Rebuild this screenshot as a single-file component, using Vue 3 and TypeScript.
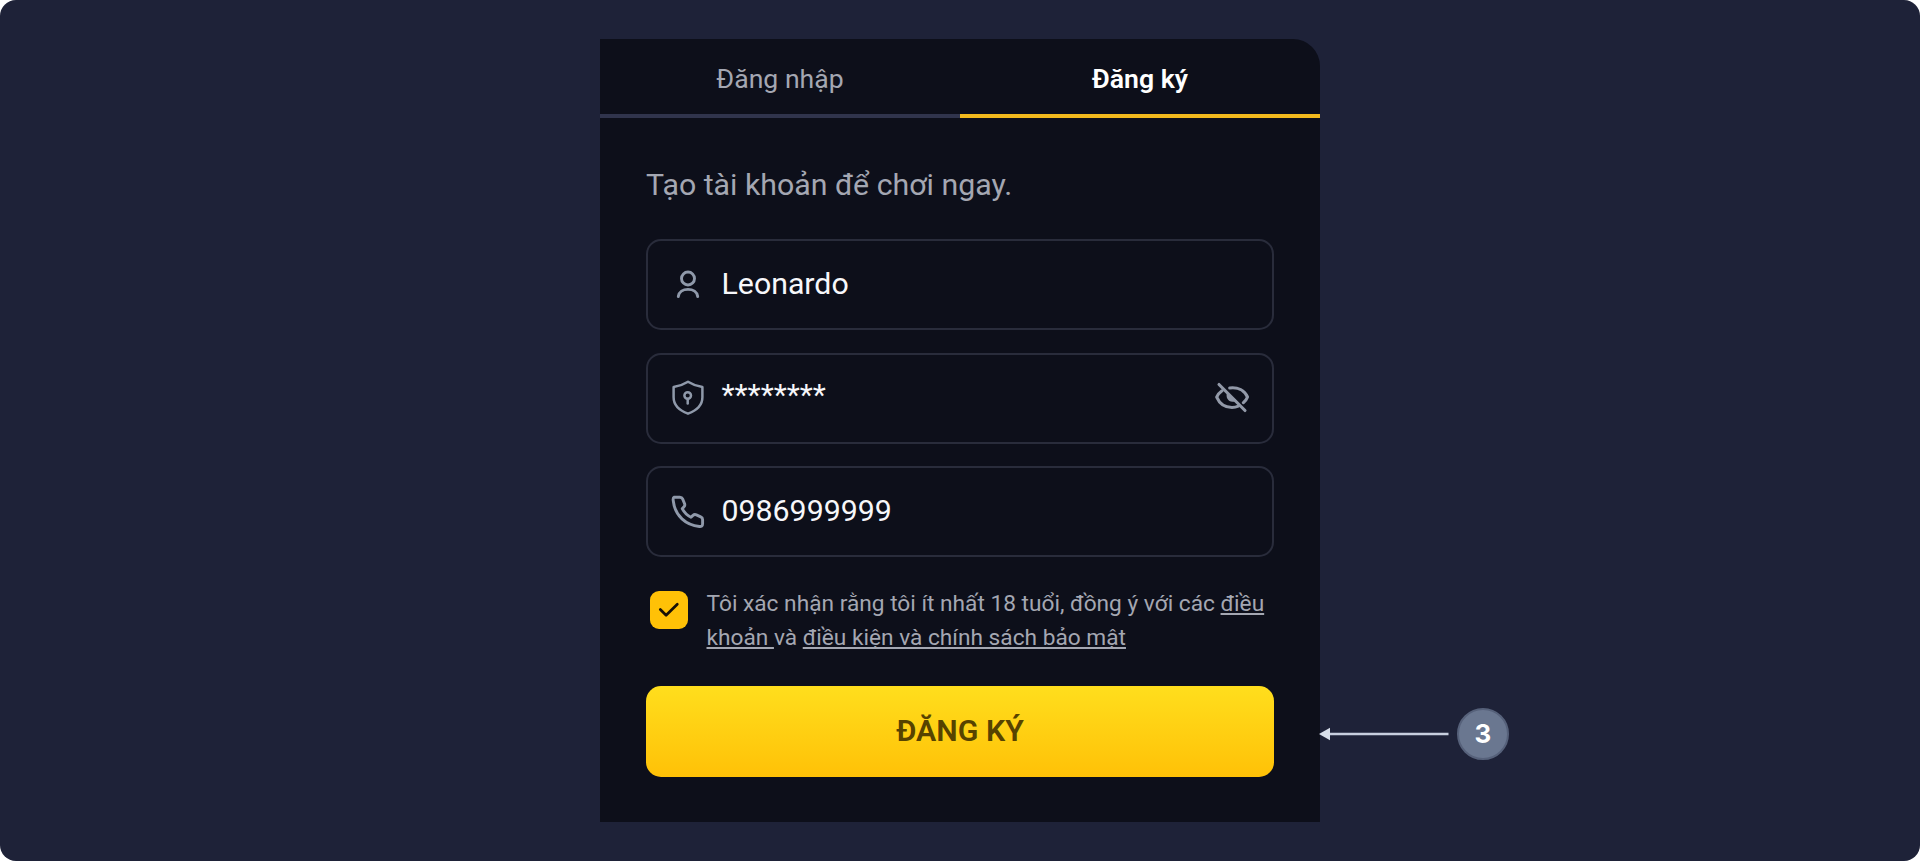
<script setup lang="ts">
import { ref } from 'vue'

type Tab = 'login' | 'register'

const activeTab = ref<Tab>('register')
const tabs: { id: Tab; label: string }[] = [
  { id: 'login', label: 'Đăng nhập' },
  { id: 'register', label: 'Đăng ký' },
]
const account = { name: 'Leonardo', password: '********', phone: '0986999999' }
const accepted = ref(true)
</script>

<template>
  <main class="stage">
    <section class="card">
      <nav class="tabs">
        <div
          v-for="tab in tabs"
          :key="tab.id"
          class="tab"
          :class="{ active: tab.id === activeTab }"
          @click="activeTab = tab.id"
        >
          <span>{{ tab.label }}</span>
        </div>
      </nav>

      <div class="body">
        <p class="intro"><span>Tạo tài khoản để chơi ngay.</span></p>

        <div class="fields">
          <div class="field">
            <svg class="icon" viewBox="0 0 36 36">
              <g fill="none" stroke="currentColor" stroke-width="2.9" stroke-linecap="round">
                <circle cx="18" cy="11.500" r="6.500" />
                <path d="M8.300 29.500c.6-4.500 4.700-7.100 9.700-7.100s9.100 2.600 9.700 7.100" />
              </g>
            </svg>
            <span class="value name">{{ account.name }}</span>
          </div>

          <div class="field">
            <svg class="icon" viewBox="0 0 36 36">
              <g fill="none" stroke="currentColor" stroke-width="2.500" stroke-linecap="round" stroke-linejoin="round">
                <path d="M18 1.700C13.500 4.500 9 6.200 3.600 7V17.300C3.600 25 8.800 30.300 18 33.700 27.200 30.300 32.400 25 32.400 17.300V7C27 6.200 22.500 4.500 18 1.700Z" />
                <circle cx="17.700" cy="15.500" r="3.300" />
                <path d="M17.700 19V23.500" />
              </g>
            </svg>
            <span class="value password">{{ account.password }}</span>
            <svg class="icon eye" viewBox="0 0 36 36">
              <g fill="none" stroke="currentColor" stroke-width="3.100" stroke-linecap="round" stroke-linejoin="round">
                <path d="M15.700 8C24 6.900 30.500 10.700 33.500 17 32.700 19.200 31.200 21.300 29.300 22.700" />
                <path d="M8 10.800C5.600 12.500 3.900 14.500 2.700 17.200 5.600 24 11.300 27.500 18 27.500 20.500 27.500 22.500 27 24.300 26.200" />
                <path d="M5 4.500 31 30.500" />
              </g>
              <path d="M13.200 12.500C11.300 17 14 21.800 18.500 21.800 20.300 21.800 21.700 21.300 22.700 20.500Z" fill="currentColor" />
            </svg>
          </div>

          <div class="field">
            <svg class="icon" viewBox="0 0 36 36">
              <path
                d="M4.200 3.200H9.900C11.300 3.200 12.100 3.700 12.600 4.900L14.600 9.700C15 10.900 14.900 11.800 14 12.700L12.200 14.700C13.900 18 17.400 21.500 21 23.300L23 21.400C24 20.500 25.200 20.400 26.400 20.900L30.700 22.800C32.100 23.400 32.600 24.200 32.600 25.600V29.800C32.600 32 31.300 32.700 29.400 32.500 16 31.300 5 22 3.300 7 3 4.800 2.700 3.700 4.200 3.200Z"
                fill="none"
                stroke="currentColor"
                stroke-width="2.900"
                stroke-linejoin="round"
              />
            </svg>
            <span class="value phone">{{ account.phone }}</span>
          </div>
        </div>

        <div class="consent">
          <div class="checkbox" @click="accepted = !accepted">
            <svg v-if="accepted" viewBox="0 0 38 38">
              <path d="M10.300 18.500 16.100 24.200 27.300 13.200" fill="none" stroke="#171006" stroke-width="2.700" stroke-linecap="round" stroke-linejoin="round" />
            </svg>
          </div>
          <p class="terms">
            <span class="line">Tôi xác nhận rằng tôi ít nhất 18 tuổi, đồng ý với các <u>điều</u></span>
            <span class="line second"><u>khoản </u>và <u>điều kiện và chính sách bảo mật</u></span>
          </p>
        </div>

        <div class="submit"><span>ĐĂNG KÝ</span></div>
      </div>

      <div class="callout">
        <svg class="arrow" viewBox="0 0 130 14">
          <path d="M9 7H129.500" stroke="#c8cfdf" stroke-width="2.300" />
          <path d="M0 7 11 .7V13.300Z" fill="#d9dfeb" />
        </svg>
        <span class="step">3</span>
      </div>
    </section>
  </main>
</template>

<style>
body {
  background: #fff;
}
</style>

<style scoped>
.stage {
  box-sizing: border-box;
  height: 861px;
  padding-top: 39px;
  border-radius: 16px;
  background: #1e2238;
  font-family: Roboto, "Noto Sans", sans-serif;
}
.card {
  position: relative;
  box-sizing: border-box;
  width: 720px;
  height: 783px;
  margin: 0 auto;
  border-radius: 0 27px 0 0;
  background: #0d0f1a;
}
.tabs {
  display: grid;
  grid-template-columns: 1fr 1fr;
}
.tab {
  box-sizing: border-box;
  height: 79px;
  padding-top: 23px;
  border-bottom: 4px solid #30344c;
  color: #a4a7b2;
  font-size: 26.600px;
  line-height: 34px;
  text-align: center;
}
.tab.active {
  border-color: #f2b91d;
  color: #fff;
  font-weight: 600;
}
.body {
  padding: 46px 46px 0;
}
.intro {
  margin: 0;
  height: 75px;
  line-height: 42px;
  color: #a4a7b2;
  font-size: 30.300px;
}
.fields {
  display: grid;
  gap: 22.500px;
}
.field {
  box-sizing: border-box;
  display: flex;
  align-items: center;
  height: 91px;
  padding: 0 22px 0 21.500px;
  border: 2px solid #292c3b;
  border-radius: 15px;
}
.icon {
  flex: none;
  width: 36px;
  height: 36px;
  color: #8f99aa;
}
.eye {
  margin-left: auto;
  color: #9299a8;
}
.value {
  margin-left: 16px;
  padding-bottom: 2px;
  color: #f7f7fa;
  font-size: 30.300px;
  line-height: 40px;
}
.value.password {
  padding-bottom: 6px;
}
.consent {
  display: flex;
  margin-top: 34px;
  padding-left: 3.500px;
}
.checkbox {
  width: 38px;
  height: 38px;
  border-radius: 9px;
  background: #ffc107;
}
.checkbox svg {
  display: block;
}
.terms {
  margin: -4px 0 0 19px;
  color: #a4a7b2;
  font-size: 22.700px;
  line-height: 34px;
}
.line {
  display: block;
  white-space: nowrap;
}
.terms u {
  text-decoration-thickness: 1.500px;
  text-underline-offset: 2px;
  text-decoration-skip-ink: none;
}
.submit {
  height: 91px;
  margin-top: 30.500px;
  border-radius: 15px;
  background: linear-gradient(#ffde1d, #ffc107);
  color: #574300;
  font-size: 30.300px;
  font-weight: 600;
  line-height: 89px;
  text-align: center;
}
.callout {
  position: absolute;
  left: 719px;
  top: 669px;
  display: flex;
  align-items: center;
  gap: 8px;
}
.arrow {
  width: 130px;
  height: 14px;
}
.step {
  box-sizing: border-box;
  width: 52px;
  height: 52px;
  border: 2px solid #56617a;
  border-radius: 50%;
  background: #6a7790;
  color: #fff;
  font: 700 26px/48px Inter, sans-serif;
  text-align: center;
}
</style>
